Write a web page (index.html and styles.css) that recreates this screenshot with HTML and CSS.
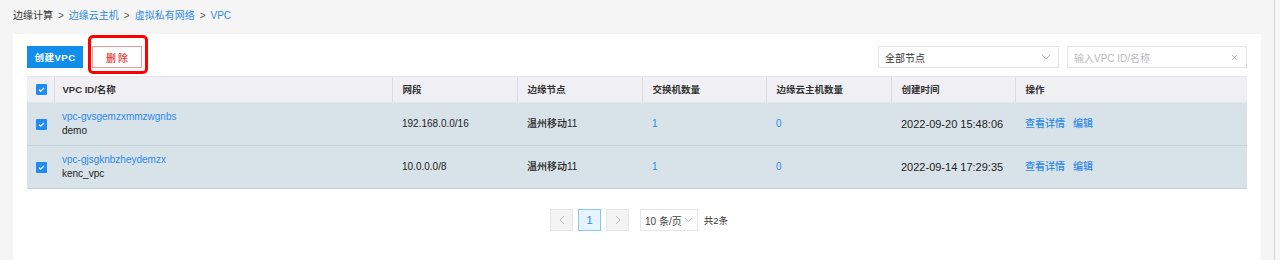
FILE: index.html
```html
<!DOCTYPE html>
<html lang="zh-CN">
<head>
  <meta charset="UTF-8">
  <title>VPC</title>
  <link rel="stylesheet" href="styles.css">
</head>
<body>
  <div class="layout">
    <div class="main">
      <div class="breadcrumb">
        <span>边缘计算</span><span class="sep">&gt;</span><a>边缘云主机</a><span class="sep">&gt;</span><a>虚拟私有网络</a><span class="sep">&gt;</span><a>VPC</a>
      </div>

      <div class="card">
        <div class="toolbar">
          <div class="actions">
            <button class="btn btn-primary">创建VPC</button>
            <span class="mark-wrap">
              <button class="btn btn-danger">删除</button>
              <span class="mark"></span>
            </span>
          </div>
          <div class="filters">
            <div class="select">
              <span>全部节点</span>
              <svg width="10" height="6" viewBox="0 0 10 6"><path d="M1 1l4 4 4-4" fill="none" stroke="#b5b5b5" stroke-width="1"/></svg>
            </div>
            <div class="search">
              <span class="placeholder">输入VPC ID/名称</span>
              <svg width="7" height="7" viewBox="0 0 7 7"><path d="M1 1l5 5M6 1l-5 5" stroke="#bbb" stroke-width="1"/></svg>
            </div>
          </div>
        </div>

        <table class="grid">
          <colgroup>
            <col style="width:27px">
            <col style="width:338px">
            <col style="width:125px">
            <col style="width:125px">
            <col style="width:124px">
            <col style="width:125px">
            <col style="width:124px">
            <col>
          </colgroup>
          <tr class="heading">
            <td class="check"><span class="cb"><svg width="9" height="9" viewBox="0 0 9 9"><path d="M2 4.6l1.7 1.6L7 3" fill="none" stroke="#fff" stroke-width="1.3"/></svg></span></td>
            <td>VPC ID/名称</td>
            <td>网段</td>
            <td>边缘节点</td>
            <td>交换机数量</td>
            <td>边缘云主机数量</td>
            <td>创建时间</td>
            <td>操作</td>
          </tr>
          <tr class="item">
            <td class="check"><span class="cb"><svg width="9" height="9" viewBox="0 0 9 9"><path d="M2 4.6l1.7 1.6L7 3" fill="none" stroke="#fff" stroke-width="1.3"/></svg></span></td>
            <td><a>vpc-gvsgemzxmmzwgnbs</a><br>demo</td>
            <td>192.168.0.0/16</td>
            <td>温州移动11</td>
            <td><a>1</a></td>
            <td><a>0</a></td>
            <td class="time">2022-09-20 15:48:06</td>
            <td><a>查看详情</a><a class="gap">编辑</a></td>
          </tr>
          <tr class="item">
            <td class="check"><span class="cb"><svg width="9" height="9" viewBox="0 0 9 9"><path d="M2 4.6l1.7 1.6L7 3" fill="none" stroke="#fff" stroke-width="1.3"/></svg></span></td>
            <td><a>vpc-gjsgknbzheydemzx</a><br>kenc_vpc</td>
            <td>10.0.0.0/8</td>
            <td>温州移动11</td>
            <td><a>1</a></td>
            <td><a>0</a></td>
            <td class="time">2022-09-14 17:29:35</td>
            <td><a>查看详情</a><a class="gap">编辑</a></td>
          </tr>
        </table>

        <div class="pager">
          <span class="page disabled"><svg width="6" height="10" viewBox="0 0 6 10"><path d="M5 1L1 5l4 4" fill="none" stroke="#bbb" stroke-width="1"/></svg></span>
          <span class="page active">1</span>
          <span class="page disabled"><svg width="6" height="10" viewBox="0 0 6 10"><path d="M1 1l4 4-4 4" fill="none" stroke="#bbb" stroke-width="1"/></svg></span>
          <span class="size">10 条/页<svg width="9" height="6" viewBox="0 0 9 6"><path d="M1 1l3.5 3.5L8 1" fill="none" stroke="#bbb" stroke-width="1"/></svg></span>
          <span class="total">共2条</span>
        </div>
      </div>
    </div>
    <div class="edge"></div>
  </div>
</body>
</html>
```

FILE: styles.css
```css
body {
  margin: 0;
  background: #f5f5f5;
  font-family: "Liberation Sans", "Noto Sans CJK SC", sans-serif;
  font-size: 10px;
  color: #222;
  overflow: hidden;
}

a {
  color: #2f8ae8;
  cursor: pointer;
}

.layout {
  display: flex;
  height: 260px;
}

.main {
  width: 1274px;
  padding: 0 13px;
  box-sizing: border-box;
}

.edge {
  flex: 1;
  border-left: 1px solid #d2d2d2;
  background: #f7f7f7;
}

.breadcrumb {
  padding-top: 6px;
  line-height: 20px;
  font-size: 10px;
  color: #333;
}

.breadcrumb .sep {
  margin: 0 5px;
  color: #555;
}

.card {
  margin-top: 8px;
  background: #fff;
  height: 240px;
  padding: 12px 14px 0;
  box-sizing: border-box;
}

.toolbar {
  display: flex;
  justify-content: space-between;
  height: 22px;
}

.actions {
  display: flex;
  gap: 9px;
}

.btn {
  height: 22px;
  padding: 0;
  font-family: inherit;
  font-weight: 500;
  border-radius: 0;
  cursor: pointer;
}

.btn-primary {
  width: 56px;
  background: #108ee9;
  border: 1px solid #108ee9;
  color: #fff;
  font-size: 9.5px;
  font-weight: 600;
  letter-spacing: 0.5px;
}

.btn-danger {
  width: 50px;
  background: #fff;
  border: 1px solid #ef9a9a;
  color: #e53935;
  font-size: 10px;
  letter-spacing: 2px;
  padding-left: 2px;
}

.mark-wrap {
  position: relative;
  display: block;
}

.mark {
  position: absolute;
  left: -4px;
  top: -11px;
  right: -6px;
  bottom: -6px;
  border: 3px solid #f00;
  border-radius: 5px;
}

.filters {
  display: flex;
  gap: 8px;
}

.select,
.search {
  display: flex;
  align-items: center;
  justify-content: space-between;
  height: 22px;
  box-sizing: border-box;
  border: 1px solid #e3e3e3;
  padding: 0 7px 0 6px;
}

.select {
  width: 181px;
  color: #333;
}

.search {
  width: 180px;
  padding-right: 8px;
}

.placeholder {
  color: #bbb;
}

.grid {
  width: 100%;
  margin-top: 8px;
  border-collapse: collapse;
  table-layout: fixed;
}

.grid td {
  padding: 0 0 0 10px;
  vertical-align: middle;
  font-weight: 500;
  line-height: 14px;
  white-space: nowrap;
}

.grid tr.heading td {
  height: 25px;
  background: #efeff4;
  border-top: 1px solid #e4e4ea;
  border-bottom: 1px solid #e4e4ea;
  color: #333;
  font-size: 9.5px;
  font-weight: 600;
}

.grid tr.heading td + td {
  border-left: 1px solid #dcdce2;
}

.grid tr.heading td:nth-child(2) {
  padding-left: 8px;
}

.grid tr.item td {
  height: 42px;
  background: #d8e2e9;
  border-bottom: 1px solid #c6d2da;
}

.grid tr.item td:nth-child(2) {
  padding-left: 8px;
}

.grid tr.item td.time {
  font-size: 11px;
}

.grid td.check {
  padding: 0 0 0 9px;
}

.cb {
  display: flex;
  align-items: center;
  justify-content: center;
  width: 11px;
  height: 11px;
  background: #1e8cf0;
  border-radius: 1px;
}

.gap {
  margin-left: 8px;
}

.pager {
  display: flex;
  align-items: center;
  justify-content: center;
  margin-top: 20px;
  padding-left: 4px;
  height: 22px;
}

.page {
  display: flex;
  align-items: center;
  justify-content: center;
  width: 23px;
  height: 22px;
  box-sizing: border-box;
  margin-right: 5px;
  border: 1px solid #e6e6e6;
  background: #f3f3f3;
}

.page.active {
  background: #e6f4ff;
  border-color: #8cc6f7;
  color: #1e8cf0;
  font-size: 11px;
}

.size {
  display: flex;
  align-items: center;
  gap: 2px;
  height: 22px;
  box-sizing: border-box;
  margin-left: 6px;
  padding: 0 4px;
  border: 1px solid #e6e6e6;
  color: #444;
  font-size: 10px;
  white-space: nowrap;
}

.total {
  margin-left: 6px;
  font-size: 9.5px;
  color: #333;
}
```
